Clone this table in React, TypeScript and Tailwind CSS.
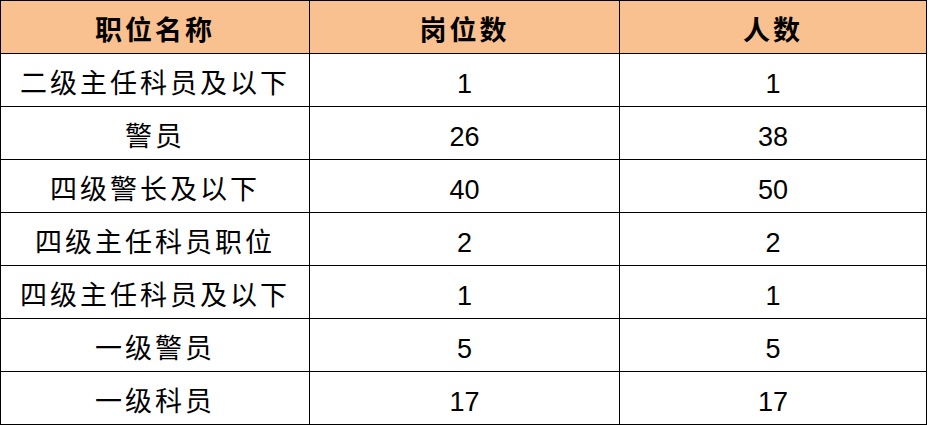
const HEAD = ["职位名称", "岗位数", "人数"];

const ROWS: [string, number, number][] = [
  ["二级主任科员及以下", 1, 1],
  ["警员", 26, 38],
  ["四级警长及以下", 40, 50],
  ["四级主任科员职位", 2, 2],
  ["四级主任科员及以下", 1, 1],
  ["一级警员", 5, 5],
  ["一级科员", 17, 17],
];

const cell =
  "h-[53px] flex items-center justify-center pt-2 border-r border-b border-black";

export default function App() {
  return (
    <div
      className="w-[929px] h-[425px] bg-white text-black"
      style={{ fontFamily: '"Liberation Sans", "Noto Sans CJK SC", sans-serif' }}
    >
      <div className="grid grid-cols-[309px_310px_307px] w-[927px] border-l border-t border-black">
        {HEAD.map((h) => (
          <div key={h} className={`${cell} bg-[#f9c090] text-[27px] font-bold tracking-[3px]`}>
            {h}
          </div>
        ))}
        {ROWS.map(([name, posts, people]) => (
          <div key={name} className="contents">
            <div className={`${cell} text-[27px] tracking-[3px]`}>{name}</div>
            <div className={`${cell} text-[27px]`}>{posts}</div>
            <div className={`${cell} text-[27px]`}>{people}</div>
          </div>
        ))}
      </div>
    </div>
  );
}
